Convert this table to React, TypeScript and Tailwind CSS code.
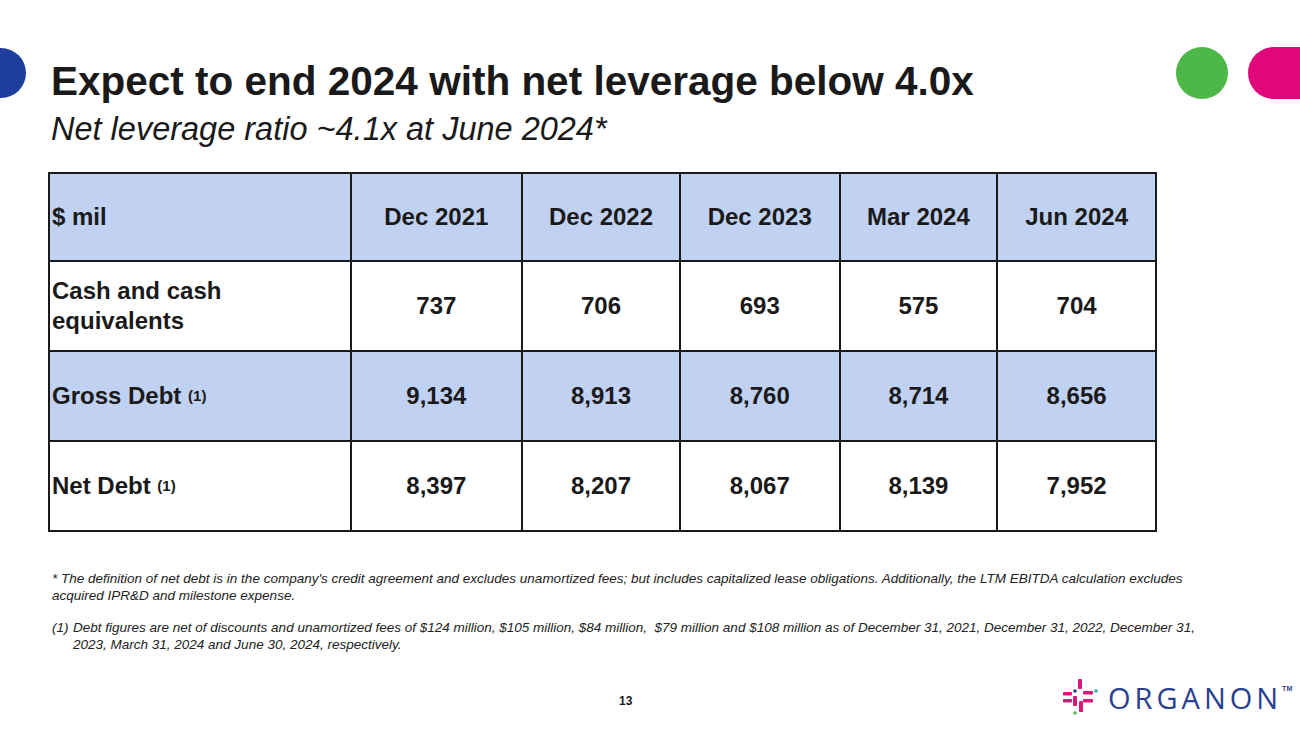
const rows = [
  { label: "Cash and cash equivalents", sup: false, shaded: false, values: ["737", "706", "693", "575", "704"] },
  { label: "Gross Debt", sup: true, shaded: true, values: ["9,134", "8,913", "8,760", "8,714", "8,656"] },
  { label: "Net Debt", sup: true, shaded: false, values: ["8,397", "8,207", "8,067", "8,139", "7,952"] },
];

const periods = ["Dec 2021", "Dec 2022", "Dec 2023", "Mar 2024", "Jun 2024"];

const OrganonMark = () => (
  <svg width="38" height="40" viewBox="0 0 38 40">
    <rect x="17" y="2" width="4" height="10" rx="1" fill="#d9187a" />
    <rect x="2" y="15" width="9" height="3.5" rx="1" fill="#d9187a" />
    <rect x="22" y="14" width="10" height="3.5" rx="1" fill="#d9187a" />
    <circle cx="14" cy="14" r="1.8" fill="#253d8c" />
    <circle cx="35" cy="14" r="1.8" fill="#2ab3b8" />
    <rect x="12" y="19" width="4" height="10" rx="1" fill="#d9187a" />
    <rect x="2" y="22" width="9" height="3.5" rx="1" fill="#d9187a" />
    <rect x="22" y="22" width="10" height="3.5" rx="1" fill="#d9187a" />
    <rect x="18" y="24" width="4" height="11" rx="1" fill="#d9187a" />
    <circle cx="14" cy="36" r="1.8" fill="#5cb85c" />
  </svg>
);

export default function App() {
  return (
    <div
      className="relative w-[1300px] h-[731px] overflow-hidden bg-white text-[#1a1a1a]"
      style={{ fontFamily: '"Liberation Sans", Arial, sans-serif' }}
    >
      {/* decorative dots */}
      <div className="absolute left-[-24px] top-[48px] h-[50px] w-[50px] rounded-full bg-[#1f3e9c]" />
      <div className="absolute left-[1176px] top-[47px] h-[52px] w-[52px] rounded-full bg-[#4db848]" />
      <div className="absolute left-[1248px] top-[47px] h-[52px] w-[90px] rounded-full bg-[#e0077b]" />

      <div className="pl-[51px] pt-[61px]">
        <h1 className="text-[40.5px] font-bold leading-none">
          Expect to end 2024 with net leverage below 4.0x
        </h1>
        <p className="mt-[11px] text-[32.5px] italic leading-none">
          Net leverage ratio ~4.1x at June 2024*
        </p>
      </div>

      <div className="pl-[48px] pt-[27px]">
        <table className="w-[1109px] border-collapse border-2 border-[#1a1a1a] text-[24px] font-bold">
          <colgroup>
            <col className="w-[302px]" />
            <col className="w-[172px]" />
            <col className="w-[158px]" />
            <col className="w-[160px]" />
            <col className="w-[158px]" />
            <col className="w-[159px]" />
          </colgroup>
          <thead>
            <tr className="h-[88px] bg-[#c0d1f2]">
              <th className="border-2 border-[#1a1a1a] px-[2px] text-left font-bold">$ mil</th>
              {periods.map((p) => (
                <th key={p} className="border-2 border-[#1a1a1a] text-center font-bold">
                  {p}
                </th>
              ))}
            </tr>
          </thead>
          <tbody>
            {rows.map((r) => (
              <tr key={r.label} className={r.shaded ? "h-[90px] bg-[#c0d1f2]" : "h-[90px] bg-white"}>
                <td className="border-2 border-[#1a1a1a] px-[2px] text-left leading-[30px]">
                  {r.label === "Cash and cash equivalents" ? (
                    <>
                      Cash and cash
                      <br />
                      equivalents
                    </>
                  ) : (
                    <>
                      {r.label}{" "}
                      {r.sup && <sup className="relative top-[-3px] text-[15px]">(1)</sup>}
                    </>
                  )}
                </td>
                {r.values.map((v, i) => (
                  <td key={i} className="border-2 border-[#1a1a1a] text-center">
                    {v}
                  </td>
                ))}
              </tr>
            ))}
          </tbody>
        </table>
      </div>

      <div className="pl-[52px] pt-[38px] text-[13.5px] italic leading-[17px] text-[#222]">
        <p>
          * The definition of net debt is in the company's credit agreement and excludes unamortized fees; but includes capitalized lease obligations. Additionally, the LTM EBITDA calculation excludes
          <br />
          acquired IPR&amp;D and milestone expense.
        </p>
        <div className="mt-[15px] flex">
          <span className="w-[21px] shrink-0">(1)</span>
          <p>
            Debt figures are net of discounts and unamortized fees of $124 million, $105 million, $84 million,&nbsp; $79 million and $108 million as of December 31, 2021, December 31, 2022, December 31,
            <br />
            2023, March 31, 2024 and June 30, 2024, respectively.
          </p>
        </div>
      </div>

      <div className="mt-[42px] pl-[619px] text-[12px] font-bold leading-none">13</div>

      <div className="absolute left-[1061px] top-[677px] flex items-center">
        <OrganonMark />
        <span
          className="ml-[9px] text-[29px] leading-none tracking-[4px] text-[#2a3f8f]"
          style={{ fontFamily: '"Open Sans", sans-serif' }}
        >
          ORGANON
        </span>
        <span className="mb-[16px] text-[7px] font-bold text-[#2a3f8f]">TM</span>
      </div>
    </div>
  );
}
